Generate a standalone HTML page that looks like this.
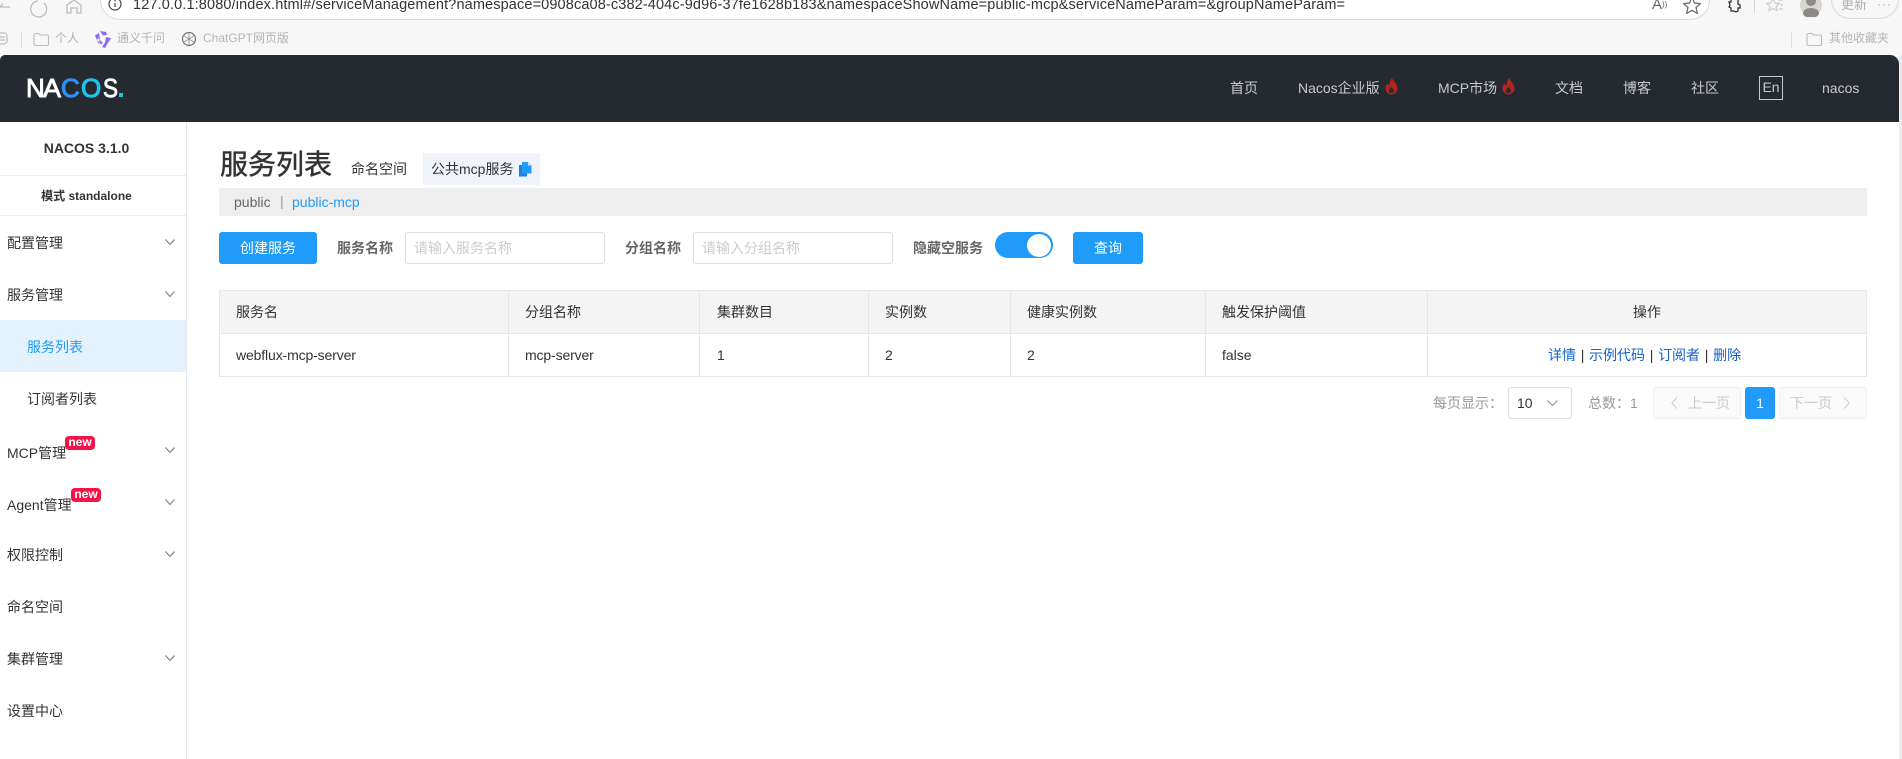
<!DOCTYPE html>
<html lang="zh"><head><meta charset="utf-8"><title>Nacos</title>
<style>
*{box-sizing:border-box}
html,body{margin:0;padding:0;width:1902px;height:759px;overflow:hidden;background:#fff}
body{position:relative;font-family:"Liberation Sans","Noto Sans CJK SC",sans-serif;font-size:14px;color:#333}
.a{position:absolute;white-space:nowrap}
.t{position:absolute;white-space:nowrap;line-height:20px}
.m{position:absolute;left:7px;white-space:nowrap;line-height:20px;color:#333}
.chev{position:absolute;left:165px;width:10px;height:6px}
.new{position:absolute;width:30px;height:14px;background:#f5144a;border-radius:4px;color:#fff;font-size:12px;font-weight:bold;line-height:13px;text-align:center}
.btn{position:absolute;background:#209bfa;color:#fff;border-radius:3px;text-align:center;top:232px;height:32px;line-height:32px}
.inp{position:absolute;top:232px;height:32px;border:1px solid #ddd;border-radius:3px;color:#ccc;line-height:30px;padding-left:8px;background:#fff}
.lb{position:absolute;top:238px;line-height:20px;font-weight:bold;color:#666;white-space:nowrap}
.nav{position:absolute;top:78px;line-height:20px;color:#c8c9cc;white-space:nowrap}
.v{position:absolute;background:#e6e6e6;width:1px}
.h{position:absolute;background:#e6e6e6;height:1px;left:219px;width:1648px}
.c{position:absolute;line-height:20px;white-space:nowrap;color:#333}
.bm{position:absolute;top:30px;font-size:12px;line-height:16px;color:#b4b4b4;white-space:nowrap}
.pg{position:absolute;top:387px;height:32px;border:1px solid #eee;background:#fafafa;border-radius:3px;color:#ccc;line-height:30px;white-space:nowrap}
a{color:#1560c9;text-decoration:none}
</style></head><body>

<!-- browser chrome -->
<div class="a" style="left:0;top:0;width:1902px;height:55px;background:#f7f7f7"></div>
<div class="a" style="left:1899px;top:55px;width:3px;height:704px;background:#ececec"></div>
<svg class="a" style="left:0;top:0" width="100" height="20" fill="none" stroke="#bdbdbd" stroke-width="1.3"><path d="M10 7H0M3 4 0 7"/><path d="M44 3a8 8 0 1 1-6-2"/><path d="M67 13V5l7-5 7 5v8h-4V8h-6v5z"/></svg>
<div class="a" style="left:100px;top:-20px;width:1610px;height:40px;background:#fff;border:1px solid #d9d9d9;border-radius:20px"></div>
<svg class="a" style="left:108px;top:0" width="16" height="14" fill="none" stroke="#444" stroke-width="1.2"><circle cx="7" cy="4" r="6"/><path d="M7 3v4M7 0v1.500"/></svg>
<div class="a" style="left:133px;top:-3px;line-height:16px;font-size:14.5px;color:#333;letter-spacing:.13px">127.0.0.1:8080/index.html#/serviceManagement?namespace=0908ca08-c382-404c-9d96-37fe1628b183&amp;namespaceShowName=public-mcp&amp;serviceNameParam=&amp;groupNameParam=</div>
<div class="a" style="left:1652px;top:-4px;font-size:15px;color:#666;line-height:18px">A<span style="font-size:8px;vertical-align:top">))</span></div>
<svg class="a" style="left:1683px;top:0" width="18" height="14" fill="none" stroke="#666" stroke-width="1.2"><path d="M9-3l2.500 6 6 .5-4.500 4 1.400 6L9 10.300l-5.400 3.200 1.400-6-4.500-4 6-.5z"/></svg>
<svg class="a" style="left:1727px;top:0" width="16" height="14" fill="none" stroke="#222" stroke-width="1.2"><path d="M4 0v2H2l1 3-1 2 2 1v3h3l2 1 2-1v-3h2V5l-2-1V0"/></svg>
<div class="a" style="left:1754px;top:0;width:1px;height:13px;background:#d5d5d5"></div>
<svg class="a" style="left:1766px;top:0" width="18" height="14" fill="none" stroke="#ccc" stroke-width="1.2"><path d="M7-2 9 3l4 .5-3 3 1 4-4-2-4 2 1-4-3-3 4-.5zM12 0h5M14 5h3M13 9h4"/></svg>
<svg class="a" style="left:1800px;top:0" width="24" height="17"><circle cx="11" cy="5" r="11" fill="#d8d6d2"/><circle cx="11" cy="1" r="5" fill="#8f8b86"/><ellipse cx="11" cy="13" rx="8" ry="5" fill="#8f8b86"/></svg>
<div class="a" style="left:1831px;top:-20px;width:68px;height:39px;border:1px solid #d9d9d9;border-radius:20px"></div>
<div class="a" style="left:1841px;top:-4px;font-size:13px;line-height:18px;color:#b0b0b0">更新</div>
<div class="a" style="left:1877px;top:-3px;font-size:12px;line-height:14px;color:#aaa;letter-spacing:1px">···</div>

<svg class="a" style="left:0;top:31px" width="10" height="16" fill="none" stroke="#bbb" stroke-width="1.2"><rect x="-5" y="2" width="12" height="11" rx="3"/><path d="M-1 6h6M-1 9h6"/></svg>
<div class="a" style="left:21px;top:31px;width:1px;height:17px;background:#dcdcdc"></div>
<svg class="a" style="left:33px;top:32px" width="17" height="15" fill="none" stroke="#bdbdbd" stroke-width="1.1"><path d="M1 3q0-1.500 1.500-1.500H6L7.500 3H14q1.500 0 1.500 1.500V12q0 1.500-1.500 1.500H2.500Q1 13.500 1 12z"/></svg>
<div class="bm" style="left:55px">个人</div>
<svg class="a" style="left:94px;top:31px" width="18" height="18" viewBox="0 0 18 18"><path d="M6 0 12 1l1 3-4 .5zM1 4.500 5 2l1 6-1.500 5zM12 6l5 1-6 10-3-1 3-4.500zM3 9l4 4.500L9 12l-5-5z" fill="#8c6cf5"/></svg>
<div class="bm" style="left:117px">通义千问</div>
<svg class="a" style="left:181px;top:31px" width="16" height="16" fill="none" stroke="#777" stroke-width="1.200"><circle cx="8" cy="8" r="6.500"/><path d="M8 1.500v13M2.500 4.500l11 7M2.500 11.500l11-7" stroke-width=".7"/></svg>
<div class="bm" style="left:203px">ChatGPT网页版</div>
<div class="a" style="left:1791px;top:32px;width:1px;height:16px;background:#dcdcdc"></div>
<svg class="a" style="left:1806px;top:32px" width="17" height="15" fill="none" stroke="#bdbdbd" stroke-width="1.1"><path d="M1 3q0-1.500 1.500-1.500H6L7.500 3H14q1.500 0 1.500 1.500V12q0 1.500-1.500 1.500H2.500Q1 13.500 1 12z"/></svg>
<div class="bm" style="left:1829px">其他收藏夹</div>

<!-- header -->
<div class="a" style="left:0;top:55px;width:1899px;height:67px;background:#252a31;border-radius:5px 9px 0 0"></div>
<svg class="a" style="left:20px;top:70px" width="110" height="35" font-family="Liberation Sans" font-size="26">
<text x="6" y="27" fill="#fff" stroke="#fff" stroke-width=".9">N</text><text x="23" y="27" fill="#fff" stroke="#fff" stroke-width=".9" textLength="18" lengthAdjust="spacingAndGlyphs">A</text>
<text x="41" y="27" fill="#2f8ff5" stroke="#2f8ff5" stroke-width="1.1">C</text><text x="61" y="27" fill="#1fc3ea" stroke="#1fc3ea" stroke-width="1.1">O</text>
<text x="83" y="27" fill="#fff" stroke="#fff" stroke-width=".9" textLength="15" lengthAdjust="spacingAndGlyphs">S</text><rect x="99" y="23" width="4" height="4" fill="#19c3d8"/></svg>

<div class="nav" style="left:1230px">首页</div>
<div class="nav" style="left:1298px">Nacos企业版</div>
<svg class="a" style="left:1385px;top:78px" width="13" height="17" viewBox="0 0 13 17"><path fill-rule="evenodd" d="M7 0c1 3 5 5 5.500 10 .2 4-3 6.500-6 6.500S.5 14 .5 10.500C.5 8 2 6.500 3 5c.3 1 .6 2 1.500 2.500C5 5 5 2 7 0zM6.500 9C5.500 10.500 4 11.500 4 13c0 1.500 1.200 2 2.500 2S9 14.500 9 13c0-1.500-1.500-2.500-2.500-4z" fill="#b3241f"/></svg>
<div class="nav" style="left:1438px">MCP市场</div>
<svg class="a" style="left:1502px;top:78px" width="13" height="17" viewBox="0 0 13 17"><path fill-rule="evenodd" d="M7 0c1 3 5 5 5.500 10 .2 4-3 6.500-6 6.500S.5 14 .5 10.500C.5 8 2 6.500 3 5c.3 1 .6 2 1.500 2.500C5 5 5 2 7 0zM6.500 9C5.500 10.500 4 11.500 4 13c0 1.500 1.200 2 2.500 2S9 14.500 9 13c0-1.500-1.500-2.500-2.500-4z" fill="#b3241f"/></svg>
<div class="nav" style="left:1555px">文档</div>
<div class="nav" style="left:1623px">博客</div>
<div class="nav" style="left:1691px">社区</div>
<div class="a" style="left:1759px;top:76px;width:24px;height:24px;border:1px solid #c8c9cc;color:#c8c9cc;text-align:center;line-height:20px">En</div>
<div class="nav" style="left:1822px;font-size:14px">nacos</div>

<!-- sidebar -->
<div class="a" style="left:186px;top:122px;width:1px;height:637px;background:#e8e8e8"></div>
<div class="a" style="left:0;top:175px;width:186px;height:1px;background:#eee"></div>
<div class="a" style="left:0;top:215px;width:186px;height:1px;background:#eee"></div>
<div class="a" style="left:0;top:138px;width:173px;text-align:center;font-weight:bold;line-height:20px">NACOS 3.1.0</div>
<div class="a" style="left:0;top:186px;width:173px;text-align:center;font-weight:bold;font-size:12px;line-height:20px">模式 standalone</div>
<div class="a" style="left:0;top:320px;width:186px;height:52px;background:#e3f2fd"></div>

<div class="m" style="top:233px">配置管理</div>
<svg class="chev" style="top:239px" fill="none" stroke="#777"><path d="M.5.500 5 5.500 9.500.500"/></svg>
<div class="m" style="top:285px">服务管理</div>
<svg class="chev" style="top:291px" fill="none" stroke="#777"><path d="M.5.500 5 5.500 9.500.500"/></svg>
<div class="m" style="top:337px;left:27px;color:#209bfa">服务列表</div>
<div class="m" style="top:389px;left:27px">订阅者列表</div>
<div class="m" style="top:443px">MCP管理</div>
<div class="new" style="left:65px;top:436px">new</div>
<svg class="chev" style="top:447px" fill="none" stroke="#777"><path d="M.5.500 5 5.500 9.500.500"/></svg>
<div class="m" style="top:495px">Agent管理</div>
<div class="new" style="left:71px;top:488px">new</div>
<svg class="chev" style="top:499px" fill="none" stroke="#777"><path d="M.5.500 5 5.500 9.500.500"/></svg>
<div class="m" style="top:545px">权限控制</div>
<svg class="chev" style="top:551px" fill="none" stroke="#777"><path d="M.5.500 5 5.500 9.500.500"/></svg>
<div class="m" style="top:597px">命名空间</div>
<div class="m" style="top:649px">集群管理</div>
<svg class="chev" style="top:655px" fill="none" stroke="#777"><path d="M.5.500 5 5.500 9.500.500"/></svg>
<div class="m" style="top:701px">设置中心</div>

<!-- main -->
<div class="a" style="left:220px;top:145px;font-size:28px;line-height:40px;color:#333;-webkit-text-stroke:.45px #333">服务列表</div>
<div class="t" style="left:351px;top:159px">命名空间</div>
<div class="a" style="left:423px;top:153px;width:117px;height:32px;background:#f0f3f9"></div>
<div class="t" style="left:431px;top:159px">公共mcp服务</div>
<svg class="a" style="left:518px;top:161px" width="15" height="16" viewBox="0 0 15 16"><path d="M1 4h8v11.500H1z" fill="#1d7fe0"/><path d="M4 1h6l3.500 3.500V12.500H4z" fill="#209bfa"/><path d="M10 1v3.500h3.500z" fill="#bfe0fb"/></svg>

<div class="a" style="left:219px;top:188px;width:1648px;height:28px;background:#eee"></div>
<div class="t" style="left:234px;top:192px;color:#666">public</div>
<div class="t" style="left:280px;top:191px;color:#999">|</div>
<div class="t" style="left:292px;top:192px;color:#209bfa">public-mcp</div>

<div class="btn" style="left:219px;width:98px">创建服务</div>
<div class="lb" style="left:337px">服务名称</div>
<div class="inp" style="left:405px;width:200px">请输入服务名称</div>
<div class="lb" style="left:625px">分组名称</div>
<div class="inp" style="left:693px;width:200px">请输入分组名称</div>
<div class="lb" style="left:913px">隐藏空服务</div>
<div class="a" style="left:995px;top:232px;width:58px;height:26px;border-radius:13px;background:#209bfa"></div>
<div class="a" style="left:1027px;top:234px;width:24px;height:23px;border-radius:50%;background:#fff"></div>
<div class="btn" style="left:1073px;width:70px">查询</div>

<!-- table -->
<div class="a" style="left:219px;top:290px;width:1648px;height:43px;background:#f4f4f4"></div>
<div class="h" style="top:290px"></div><div class="h" style="top:333px"></div><div class="h" style="top:376px"></div>
<div class="v" style="left:219px;top:290px;height:87px"></div>
<div class="v" style="left:508px;top:290px;height:87px"></div>
<div class="v" style="left:699px;top:290px;height:87px"></div>
<div class="v" style="left:868px;top:290px;height:87px"></div>
<div class="v" style="left:1010px;top:290px;height:87px"></div>
<div class="v" style="left:1205px;top:290px;height:87px"></div>
<div class="v" style="left:1427px;top:290px;height:87px"></div>
<div class="v" style="left:1866px;top:290px;height:87px"></div>

<div class="c" style="left:236px;top:302px">服务名</div>
<div class="c" style="left:525px;top:302px">分组名称</div>
<div class="c" style="left:717px;top:302px">集群数目</div>
<div class="c" style="left:885px;top:302px">实例数</div>
<div class="c" style="left:1027px;top:302px">健康实例数</div>
<div class="c" style="left:1222px;top:302px">触发保护阈值</div>
<div class="c" style="left:1633px;top:302px">操作</div>
<div class="c" style="left:236px;top:345px;letter-spacing:-.13px">webflux-mcp-server</div>
<div class="c" style="left:525px;top:345px;letter-spacing:-.13px">mcp-server</div>
<div class="c" style="left:717px;top:345px">1</div>
<div class="c" style="left:885px;top:345px">2</div>
<div class="c" style="left:1027px;top:345px">2</div>
<div class="c" style="left:1222px;top:345px">false</div>
<div class="c" style="left:1548px;top:345px;word-spacing:.8px"><a>详情</a> | <a>示例代码</a> | <a>订阅者</a> | <a>删除</a></div>

<!-- pagination -->
<div class="c" style="left:1433px;top:393px;color:#999">每页显示：</div>
<div class="a" style="left:1508px;top:387px;width:64px;height:32px;border:1px solid #ddd;border-radius:3px;background:#fff;line-height:30px;padding-left:8px">10</div>
<svg class="a" style="left:1547px;top:400px" width="11" height="7" fill="none" stroke="#888"><path d="M.5.500 5.500 5.500 10.500.500"/></svg>
<div class="c" style="left:1588px;top:393px;color:#999">总数：1</div>
<div class="pg" style="left:1653px;width:88px;padding-left:34px">上一页</div>
<svg class="a" style="left:1671px;top:397px" width="7" height="12" fill="none" stroke="#ccc"><path d="M6 .5.800 6 6 11.500"/></svg>
<div class="a" style="left:1745px;top:387px;width:30px;height:32px;border-radius:3px;background:#209bfa;color:#fff;text-align:center;line-height:32px">1</div>
<div class="pg" style="left:1779px;width:88px;padding-left:10px">下一页</div>
<svg class="a" style="left:1843px;top:397px" width="7" height="12" fill="none" stroke="#ccc"><path d="M1 .5 6.200 6 1 11.500"/></svg>
</body></html>
